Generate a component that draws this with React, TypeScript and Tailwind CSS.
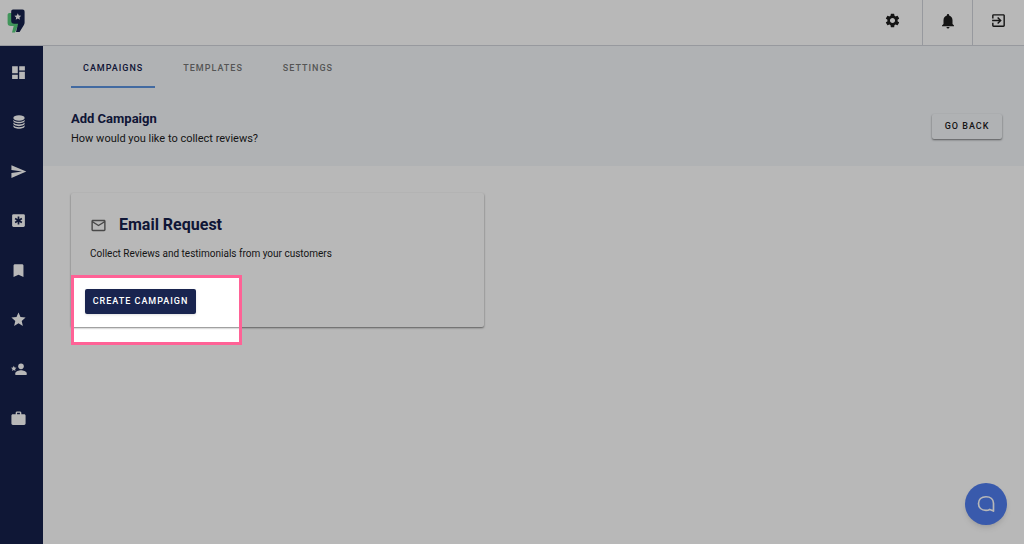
import clsx from 'clsx';
import { FC, ReactNode } from 'react';
import {
  MdBookmark,
  MdDashboard,
  MdExitToApp,
  MdMailOutline,
  MdNotifications,
  MdSend,
  MdSettings,
  MdStar,
  MdWork,
} from 'react-icons/md';

const Logo: FC = () => (
  <svg viewBox="0 0 18 24" className="h-6 w-[18px]" aria-hidden="true">
    <path
      d="M2.5 4H6v8.5h5v4L8 23.5H5l1.7-6.5H3.8C1.6 17 .6 15.8 .6 14V6c0-1.2.7-2 1.9-2Z"
      fill="#59cf7d"
    />
    <path
      d="M6 .6h9.500c1.300 0 2.100.8 2.100 2.100v10.800c0 1-.2 1.700-.7 2.600L12.600 23H9l2.100-8.200H7.200c-1.800 0-3-1-3-2.800V2.700C4.200 1.400 5 .6 6 .6Z"
      fill="#15204b"
    />
    <path
      d="m10.800 4.300 1 2.200 2.400.3-1.800 1.600.5 2.400-2.100-1.200-2.100 1.200.5-2.400-1.800-1.600 2.400-.3Z"
      fill="#fff"
    />
  </svg>
);

const DatabaseIcon: FC = () => (
  <svg viewBox="0 0 24 24" fill="currentColor" className="size-4">
    <ellipse cx="12" cy="6" rx="8.5" ry="4" />
    <path d="M3.5 8.500c1.500 2 4.500 3 8.500 3s7-1 8.500-3v1.700c0 2.100-3.800 3.800-8.500 3.800s-8.500-1.700-8.500-3.800Z" />
    <path d="M3.5 12.700c1.500 2 4.500 3 8.500 3s7-1 8.500-3v1.700c0 2.100-3.800 3.800-8.500 3.800s-8.500-1.700-8.500-3.800Z" />
    <path d="M3.5 16.900c1.500 2 4.500 3 8.500 3s7-1 8.500-3v1.500c0 2.100-3.800 3.800-8.500 3.800s-8.500-1.700-8.500-3.800Z" />
  </svg>
);

const AsteriskBoxIcon: FC = () => (
  <svg viewBox="0 0 24 24" className="size-[17px]">
    <rect x="3" y="3" width="18" height="18" rx="2" fill="currentColor" />
    <path
      d="M12 6.500v11M7.200 9.200l9.600 5.600M16.800 9.200l-9.600 5.600"
      stroke="#15204b"
      strokeWidth="2.4"
    />
  </svg>
);

const PersonStarIcon: FC = () => (
  <svg viewBox="0 0 24 24" fill="currentColor" className="size-4">
    <circle cx="15" cy="8" r="4.2" />
    <path d="M15 14c-3 0-8.500 1.400-8.500 4.500V21h17v-2.500C23.500 15.400 18 14 15 14Z" />
    <path d="m4.200 7 1.200 2.700 3 .3-2.200 2 .6 2.900-2.600-1.500-2.600 1.500.6-2.900L0 10l3-.3Z" />
  </svg>
);

const ChatIcon: FC = () => (
  <svg
    viewBox="0 0 24 24"
    fill="none"
    stroke="currentColor"
    strokeWidth="2"
    strokeLinejoin="round"
    className="size-5"
  >
    <path d="M21 20.500V11c0-4.500-3.500-7.700-9-7.700S3 6.700 3 11.500s3.500 8.200 9 8.200c1.700 0 3.200-.4 4.500-1.200Z" />
  </svg>
);

const navItems: { label: string; icon: ReactNode }[] = [
  { label: 'Dashboard', icon: <MdDashboard /> },
  { label: 'Data', icon: <DatabaseIcon /> },
  { label: 'Campaigns', icon: <MdSend /> },
  { label: 'Widgets', icon: <AsteriskBoxIcon /> },
  { label: 'Bookmarks', icon: <MdBookmark /> },
  { label: 'Reviews', icon: <MdStar /> },
  { label: 'Referrals', icon: <PersonStarIcon /> },
  { label: 'Business', icon: <MdWork /> },
];

const tabs = ['Campaigns', 'Templates', 'Settings'];

const Header: FC = () => (
  <header className="flex h-[46px] items-stretch justify-between border-b border-gray-300 bg-white text-[#1c1c1c]">
    <a href="#" aria-label="Home" className="flex items-center pb-1 pl-[7px]">
      <Logo />
    </a>
    <div className="flex text-[17px]">
      <button aria-label="Settings" className="w-[60px] pb-1">
        <MdSettings className="mx-auto" />
      </button>
      <button
        aria-label="Notifications"
        className="w-[50px] border-l border-gray-300 pb-1"
      >
        <MdNotifications className="mx-auto size-[18px]" />
      </button>
      <button
        aria-label="Log out"
        className="w-[52px] border-l border-gray-300 pb-1"
      >
        <MdExitToApp className="mx-auto" />
      </button>
    </div>
  </header>
);

const Sidebar: FC = () => (
  <aside className="w-[43px] shrink-0 bg-[#15204b] pt-[18px] text-[17px] text-white">
    <nav className="flex h-[363px] flex-col items-center justify-between pr-[6px]">
      {navItems.map(({ label, icon }) => (
        <a
          key={label}
          href="#"
          aria-label={label}
          className="flex h-4 items-center"
        >
          {icon}
        </a>
      ))}
    </nav>
  </aside>
);

// Dims everything around the highlighted area
const Spotlight: FC = () => (
  <div className="pointer-events-none absolute top-[82px] left-0 z-20 h-[70px] w-[171px] border-3 border-[#ff6296] shadow-[0_0_0_2000px_rgba(0,0,0,0.28)]" />
);

export default function App() {
  return (
    <div className="relative flex min-h-screen flex-col overflow-hidden bg-white font-[Roboto,sans-serif] text-[#1c1c1c]">
      <Header />
      <div className="flex grow">
        <Sidebar />
        <main className="grow">
          <section className="h-[120px] bg-[#f4f7fa] pr-[22px] pl-7">
            <nav className="flex gap-4">
              {tabs.map((tab, index) => (
                <a
                  key={tab}
                  href="#"
                  className={clsx(
                    'h-[42px] border-b-2 px-3 pt-[14px] text-[9px] leading-4 font-medium tracking-[1px] uppercase',
                    index === 0
                      ? 'border-[#5c93e0] text-[#15204b]'
                      : 'border-transparent text-[#777]',
                  )}
                >
                  {tab}
                </a>
              ))}
            </nav>
            <div className="flex items-center justify-between pt-4">
              <div className="pt-[5px]">
                <h1 className="text-[13px] leading-5 font-bold text-[#15204b]">
                  Add Campaign
                </h1>
                <p className="text-[11px] leading-5">
                  How would you like to collect reviews?
                </p>
              </div>
              <button className="h-[25px] w-[70px] rounded-xs text-[9px] font-medium tracking-[1px] shadow-[0_1px_2px_rgba(0,0,0,0.5)]">
                GO BACK
              </button>
            </div>
          </section>
          <section className="pt-[27px] pl-7">
            <article className="relative h-[134px] w-[413px] rounded-xs bg-white shadow-[0_1px_2px_rgba(0,0,0,0.5)]">
              <div className="flex items-center pt-5 pl-[19px]">
                <MdMailOutline className="size-[17px] text-[#666]" />
                <h2 className="pl-3 text-base leading-6 font-bold text-[#15204b]">
                  Email Request
                </h2>
              </div>
              <p className="pt-[9px] pl-[19px] text-[10px] leading-4">
                Collect Reviews and testimonials from your customers
              </p>
              <button className="mt-[27px] ml-[14px] block h-[25px] w-[111px] rounded-xs bg-[#19244f] text-[9px] font-medium tracking-[1px] text-white shadow-sm">
                CREATE CAMPAIGN
              </button>
              <Spotlight />
            </article>
          </section>
        </main>
      </div>
      <button
        aria-label="Open chat"
        className="absolute right-[17px] bottom-[19px] flex size-[42px] items-center justify-center rounded-full bg-[#507def] text-white shadow-md"
      >
        <ChatIcon />
      </button>
    </div>
  );
}
